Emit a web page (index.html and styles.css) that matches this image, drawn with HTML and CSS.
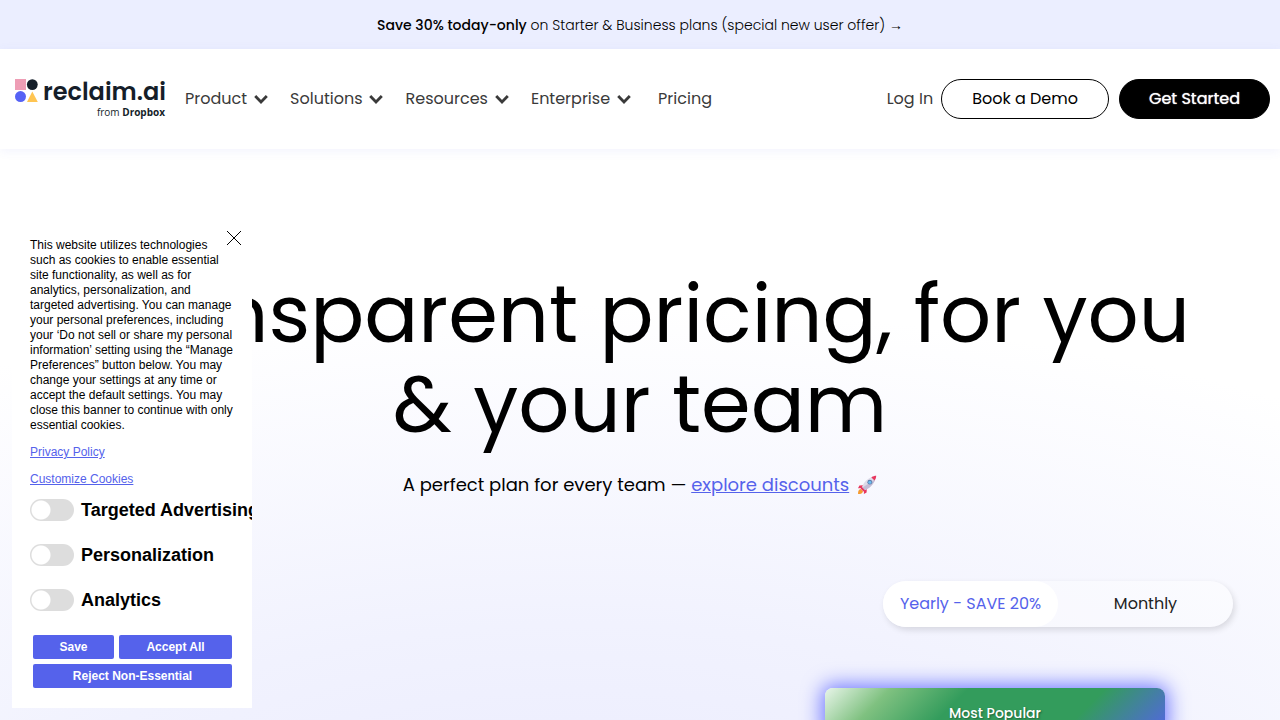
FILE: index.html
```html
<!DOCTYPE html>
<html lang="en">
<head>
  <meta charset="UTF-8" />
  <meta name="viewport" content="width=device-width, initial-scale=1" />
  <title>Pricing | Reclaim.ai</title>
  <link rel="stylesheet" href="styles.css">
</head>

<body>
  <svg class="defs" aria-hidden="true">
    <symbol id="chevron" viewBox="0 0 14 10">
      <path d="M1.2 2 7 8 12.8 2" fill="none" stroke="currentColor" stroke-width="2.8" />
    </symbol>
  </svg>

  <a class="promo" href="#"><strong>Save 30% today-only</strong> on Starter &amp; Business plans (special new user offer) <span class="arrow">→</span></a>

  <header class="header">
    <a class="logo" href="#" aria-label="reclaim.ai from Dropbox">
      <span class="logo-main">
        <svg class="logo-mark" viewBox="0 0 24 24" aria-hidden="true">
          <rect x="0" y="0" width="11" height="11" fill="#ee9db5" />
          <circle cx="17.3" cy="5.6" r="5.4" fill="#151e29" />
          <circle cx="5.5" cy="17.6" r="5.5" fill="#5562f5" />
          <path d="M17.3 12.6 22.8 23H12z" fill="#ffc552" />
        </svg>
        <span class="logo-name">reclaim.ai</span>
      </span>
      <span class="logo-sub">from <b>Dropbox</b></span>
    </a>

    <nav class="nav">
      <a href="#">Product <svg><use href="#chevron" /></svg></a>
      <a href="#">Solutions <svg><use href="#chevron" /></svg></a>
      <a href="#">Resources <svg><use href="#chevron" /></svg></a>
      <a href="#">Enterprise <svg><use href="#chevron" /></svg></a>
      <a class="nav-plain" href="#">Pricing</a>
    </nav>

    <div class="actions">
      <a class="login" href="#">Log In</a>
      <a class="btn" href="#">Book a Demo</a>
      <a class="btn btn-dark" href="#">Get Started</a>
    </div>
  </header>

  <main class="hero">
    <h1>Transparent pricing, for you<br>&amp; your team</h1>
    <p class="lead">
      <span>A perfect plan for every team — <a href="#">explore discounts</a></span>
      <svg class="rocket" viewBox="0 0 20 20" aria-hidden="true">
        <path d="M6.2 10.2 2.4 10.4 1 13.2l4.4-.2zM9.8 13.8l-.2 3.8L6.9 19l.1-4.6z" fill="#e8375f" />
        <path d="M1 19c0-3 .8-4.6 2.8-5l2.2 2.2C5.6 18.2 4 19 1 19z" fill="#f59b31" />
        <path d="M4.6 13.2C6.2 8 10 3.4 16 1.8L18.2 4C16.6 10 12 13.8 6.8 15.4z" fill="#dedbe8" />
        <path d="M4.6 13.2 6.8 15.4C12 13.8 16.6 10 18.2 4z" fill="#c4bcd6" />
        <path d="M14.4 2.4C16 1.2 17.6.9 19.2.8c-.1 1.6-.4 3.2-1.6 4.8z" fill="#e8375f" />
        <path d="M4.6 11.8 8.2 15.4 6.4 16.4 3.6 13.6z" fill="#e8375f" />
        <circle cx="12.8" cy="7.2" r="2.4" fill="#5d7fae" />
        <circle cx="12.8" cy="7.2" r="1.5" fill="#6cc0f2" />
      </svg>
    </p>

    <div class="period" role="group" aria-label="Billing period">
      <button class="active" type="button">Yearly - SAVE 20%</button>
      <button type="button">Monthly</button>
    </div>

    <section class="plan">
      <div class="plan-tag">Most Popular</div>
    </section>
  </main>

  <aside class="cookies" aria-label="Cookie preferences">
    <button class="close" type="button" aria-label="Close">
      <svg viewBox="0 0 14 14"><path d="M0 0 14 14M14 0 0 14" stroke="#000" /></svg>
    </button>
    <p>This website utilizes technologies such as cookies to enable essential site functionality, as well as for analytics, personalization, and targeted advertising. You can manage your personal preferences, including your ‘Do not sell or share my personal information’ setting using the “Manage Preferences” button below. You may change your settings at any time or accept the default settings. You may close this banner to continue with only essential cookies.</p>
    <a href="#">Privacy Policy</a>
    <a href="#">Customize Cookies</a>

    <div class="switches">
      <label><input type="checkbox" /> Targeted Advertising</label>
      <label><input type="checkbox" /> Personalization</label>
      <label><input type="checkbox" /> Analytics</label>
    </div>

    <div class="cookie-buttons">
      <button type="button">Save</button>
      <button type="button">Accept All</button>
      <button class="wide" type="button">Reject Non-Essential</button>
    </div>
  </aside>
</body>
</html>
```

FILE: styles.css
```css
/* --- Global --- */
* { box-sizing: border-box; margin: 0; padding: 0; }
body {
  font-family: Poppins, Inter, sans-serif;
  background: #fff;
  color: #000;
  font-size: 16px;
  display: flex;
  flex-direction: column;
  height: 100vh;
  overflow: hidden;
}
a { color: inherit; text-decoration: none; }
button { font: inherit; border: none; cursor: pointer; }
.defs { display: none; }

/* --- Promo bar --- */
.promo {
  background: #ebeeff;
  padding: 15px 16px 13px;
  text-align: center;
  font-size: 14px;
  line-height: 21px;
  font-weight: 300;
}
.promo strong { font-weight: 500; }
.arrow { font-family: "Liberation Sans", sans-serif; line-height: 1; }

/* --- Header --- */
.header {
  display: flex;
  align-items: center;
  height: 100px;
  flex-shrink: 0;
  padding: 0 10px 0 15px;
  background: #fff;
  box-shadow: 0 2px 10px rgba(85, 98, 235, 0.08);
  z-index: 1;
}
.logo {
  display: flex;
  flex-direction: column;
  width: 150px;
  color: #151e29;
}
.logo-main { display: flex; align-items: center; gap: 4px; height: 26px; }
.logo-mark { width: 24px; height: 24px; flex-shrink: 0; }
.logo-name {
  padding-top: 2px;
  font-size: 24px;
  font-weight: 600;
  line-height: 26px;
}
.logo-sub {
  font-family: "Open Sans", sans-serif;
  font-size: 10px;
  line-height: 16px;
  text-align: right;
}

.nav {
  display: flex;
  align-items: center;
  gap: 22px;
  margin-left: 20px;
  color: #3a3a3a;
  line-height: 26px;
}
.nav a { display: flex; align-items: center; gap: 7px; white-space: nowrap; }
.nav svg { width: 14px; height: 10px; }
.nav .nav-plain { margin-left: 5px; }

.actions {
  display: flex;
  align-items: center;
  gap: 10px;
  margin-left: auto;
  white-space: nowrap;
}
.login { margin-right: -2px; padding-bottom: 2px; color: #3a3a3a; }
.btn {
  border: 1px solid #000;
  border-radius: 20px;
  padding: 0 30px;
  line-height: 38px;
}
.btn-dark {
  padding: 0 29px;
  background: #000;
  color: #fff;
  text-shadow: 0 0 1px #fff;
}

/* --- Hero --- */
.hero {
  flex: 1;
  display: flex;
  flex-direction: column;
  align-items: center;
  padding-top: 120px;
  background: radial-gradient(ellipse 1300px 580px at 45% 125%, #e9eafe 0%, #f1f2fe 45%, #fff 100%);
}
h1 {
  font-size: 80px;
  line-height: 90px;
  font-weight: 400;
  text-align: center;
  white-space: nowrap;
}
.lead {
  display: flex;
  align-items: center;
  gap: 8px;
  margin-top: 22px;
  font-size: 18px;
  line-height: 27px;
}
.lead a { color: #5562eb; text-decoration: underline; }
.rocket { width: 20px; height: 20px; }

.period {
  display: flex;
  align-self: flex-end;
  width: 350px;
  margin: 83px 47px 0 0;
  border-radius: 23px;
  background: rgba(255, 255, 255, 0.4);
  box-shadow: 2px 3px 6px rgba(0, 0, 0, 0.12);
}
.period button {
  flex: 1;
  height: 46px;
  padding-bottom: 2px;
  border-radius: 23px;
  background: none;
  color: #222;
}
.period .active { background: #fff; color: #5562eb; }

.plan {
  align-self: flex-end;
  width: 340px;
  margin: 61px 115px 0 0;
  border-radius: 8px;
  box-shadow: 0 0 20px 3px #7078ff;
}
.plan-tag {
  border-radius: 8px 8px 0 0;
  background: linear-gradient(135deg, #e8f5e9 0%, #7fc180 17%, #339c5c 37%, #339c5c 72%, #5562eb 100%);
  color: #fff;
  font-size: 14px;
  font-weight: 500;
  line-height: 50px;
  text-align: center;
  text-shadow: 1px 1px 2px rgba(0, 0, 0, 0.4);
}

/* --- Cookie banner --- */
.cookies {
  position: fixed;
  left: 12px;
  bottom: 12px;
  z-index: 2;
  width: 240px;
  padding: 18px;
  overflow: hidden;
  background: #fff;
  font-family: "Liberation Sans", sans-serif;
  font-size: 12px;
  line-height: 15px;
}
.cookies p { margin-bottom: 12px; }
.cookies a {
  display: block;
  margin-bottom: 12px;
  color: #5562eb;
  text-decoration: underline;
}
.close {
  position: absolute;
  top: 11px;
  right: 11px;
  width: 14px;
  height: 14px;
  background: none;
}
.close svg { display: block; }

.switches { margin-top: -12px; }
.switches label {
  display: flex;
  align-items: center;
  gap: 7px;
  height: 45px;
  font-size: 18px;
  line-height: 22px;
  font-weight: 700;
  white-space: nowrap;
}
.switches input {
  appearance: none;
  flex-shrink: 0;
  width: 44px;
  height: 22px;
  border-radius: 11px;
  background: radial-gradient(circle at 11px 11px, #fff 9px, #ddd 10px);
}
.switches input:checked {
  background: radial-gradient(circle at 33px 11px, #fff 9px, #5562eb 10px);
}

.cookie-buttons {
  display: grid;
  grid-template-columns: 81px 1fr;
  gap: 5px;
  margin: 13px 2px 2px 3px;
}
.cookie-buttons button {
  height: 24px;
  border-radius: 2px;
  background: #5562eb;
  color: #fff;
  font-weight: 700;
}
.cookie-buttons .wide { grid-column: span 2; }
```
